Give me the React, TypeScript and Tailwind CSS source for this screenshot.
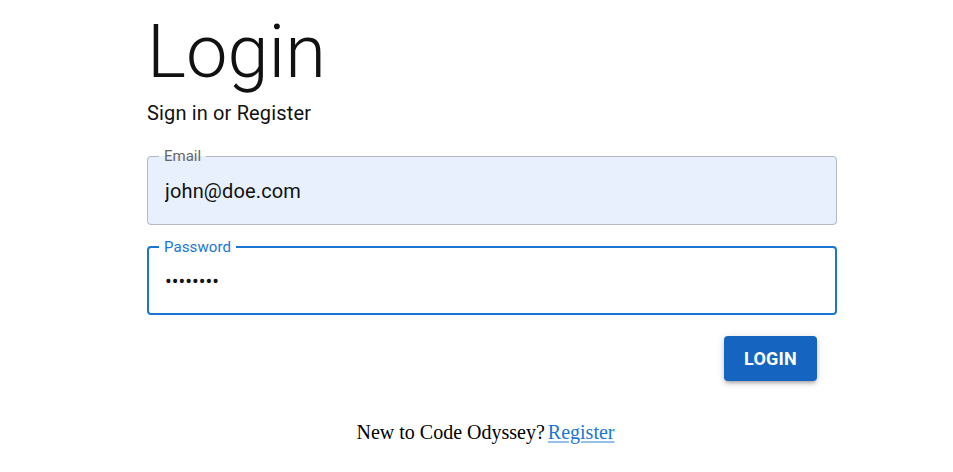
import React from 'react'

export default function App() {
  return (
    <div className="min-h-screen bg-white font-['Roboto',sans-serif]">
      <div className="ml-[147px] w-[690px] flex flex-col">
        {/* Heading */}
        <h1 className="mt-[7px] text-[74px] font-light leading-[89px] text-[#111]">Login</h1>
        <p className="mt-[2px] text-[20px] leading-[30px] tracking-[0.15px] text-[#111]">Sign in or Register</p>

        {/* Email */}
        <fieldset className="mt-[20px] rounded-[4px] border border-[#b3b8c3] bg-[#e8f0fe] pl-[11px] pr-[16px] pt-[15px] pb-[21px]">
          <legend className="px-[5px] text-[15px] leading-4 text-[#666]">Email</legend>
          <input
            readOnly
            type="email"
            defaultValue="john@doe.com"
            className="block h-[24px] w-full bg-transparent pl-[6px] text-[20px] leading-6 tracking-[0.15px] text-[#111] outline-none"
          />
        </fieldset>

        {/* Password */}
        <fieldset className="mt-[14px] rounded-[4px] border-2 border-[#1976d2] bg-white pl-[10px] pr-[16px] pt-[14px] pb-[20px]">
          <legend className="px-[5px] text-[15px] leading-4 tracking-[0.1px] text-[#1976d2]">Password</legend>
          <input
            readOnly
            type="password"
            defaultValue="password"
            className="block h-[24px] w-full bg-transparent pl-[6px] text-[20px] leading-6 text-[#111] outline-none"
          />
        </fieldset>

        {/* Action */}
        <div className="mt-[21px] flex justify-end pr-[20px]">
          <button className="h-[45px] w-[93px] rounded-[4px] bg-[#1565c0] text-[18px] font-bold tracking-[0.2px] text-white shadow-[0_3px_3px_-2px_rgba(0,0,0,0.2),0_3px_4px_0_rgba(0,0,0,0.14),0_1px_8px_0_rgba(0,0,0,0.12)]">
            LOGIN
          </button>
        </div>

        <p className="mt-[40px] pr-[13px] text-center font-['Liberation_Serif',serif] text-[20px] leading-[23px] text-black">
          New to Code Odyssey?
          <a href="#" className="ml-[3px] text-[#1976d2] underline decoration-[rgba(25,118,210,0.45)] underline-offset-2">
            Register
          </a>
        </p>
      </div>
    </div>
  )
}
